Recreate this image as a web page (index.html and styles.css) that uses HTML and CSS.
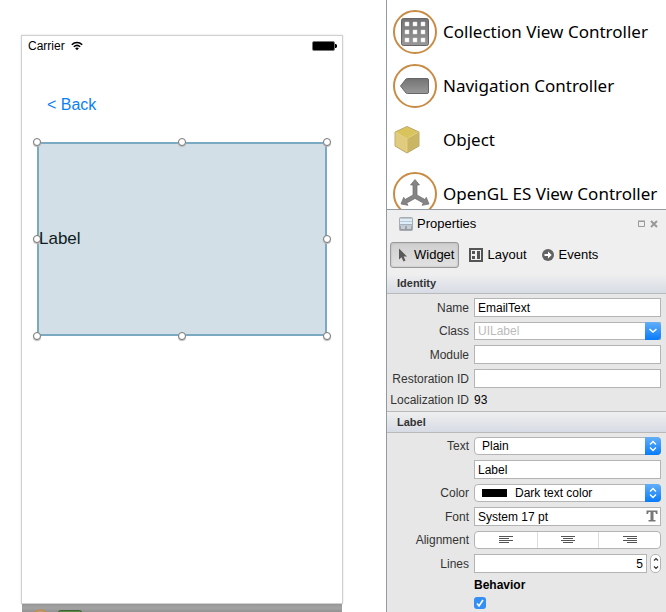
FILE: index.html
```html
<!DOCTYPE html>
<html lang="en">
<head>
<meta charset="utf-8">
<title>Interface designer</title>
<link rel="stylesheet" href="styles.css">
</head>
<body>
<main class="canvas">
  <section class="device" aria-label="Screen preview">
    <div class="status">
      <span>Carrier</span>
      <svg class="wifi" viewBox="0 0 12 10" width="12" height="10" aria-hidden="true">
        <path d="M.8 3.8C3.8.8 8.200.8 11.200 3.800M2.800 5.800C4.800 4 7.200 4 9.200 5.800" fill="none" stroke="#000" stroke-width="1.500"/>
        <path d="M4.100 7.200Q6 5.700 7.900 7.200L6 9.300Z"/>
      </svg>
      <svg class="battery" viewBox="0 0 25 10" width="25" height="10" aria-hidden="true">
        <rect x=".5" y=".5" width="22" height="9" rx="1.500" stroke="#777"/>
        <path d="M23 3h1l1 1v2l-1 1h-1z"/>
      </svg>
    </div>
    <a class="back" href="#">&lt; Back</a>
    <div class="selection">
      <i class="handle top left"></i><i class="handle top center"></i><i class="handle top right"></i>
      <i class="handle middle left"></i><i class="handle middle right"></i>
      <i class="handle bottom left"></i><i class="handle bottom center"></i><i class="handle bottom right"></i>
      <span class="label">Label</span>
    </div>
  </section>
  <div class="dock">
    <svg viewBox="0 0 64 8" width="64" height="8" aria-hidden="true">
      <circle cx="18.500" cy="14" r="8" fill="#b1a18a" stroke="#c78c45" stroke-width="1.500"/>
      <rect x="36.500" y="6.500" width="23" height="12" rx="2" fill="#5b894c" stroke="#3c642f"/>
    </svg>
  </div>
</main>

<aside class="side">
  <svg class="defs" width="0" height="0" aria-hidden="true">
    <defs>
      <linearGradient id="metal" x2="0" y2="1"><stop stop-color="#737373"/><stop offset="1" stop-color="#999"/></linearGradient>
      <linearGradient id="steel" x2="0" y2="1"><stop stop-color="#c5cbd1"/><stop offset="1" stop-color="#8f969e"/></linearGradient>
    </defs>
  </svg>
  <ul class="toolbox">
    <li>
      <svg viewBox="0 0 44 44" width="44" height="44" aria-hidden="true">
        <circle cx="22" cy="22" r="21" fill="#fff" stroke="#c78c45" stroke-width="2"/>
        <rect x="8.500" y="8.500" width="27" height="27" rx="2" fill="url(#metal)" stroke="#666"/>
        <path d="M12 12h4v4h-4zM20 12h4v4h-4zM28 12h4v4h-4zM12 20h4v4h-4zM20 20h4v4h-4zM28 20h4v4h-4zM12 28h4v4h-4zM20 28h4v4h-4zM28 28h4v4h-4z" fill="#fff" stroke="#ddd" stroke-width=".5"/>
      </svg>
      Collection View Controller
    </li>
    <li>
      <svg viewBox="0 0 44 44" width="44" height="44" aria-hidden="true">
        <circle cx="22" cy="22" r="21" fill="#fff" stroke="#c78c45" stroke-width="2"/>
        <path d="M7.500 22 13 15q.7-.5 1.500-.5H34q1.500 0 1.500 1.500V28q0 1.500-1.500 1.500H14.500q-.8 0-1.500-.5Z" fill="url(#metal)" stroke="#666"/>
      </svg>
      Navigation Controller
    </li>
    <li>
      <svg viewBox="0 0 44 44" width="44" height="44" aria-hidden="true">
        <path d="M14 8.500 26 14V28L14 35 2 28V14Z" fill="#d9c576" stroke="#a89250" stroke-width=".8"/>
        <path d="M14 9 25.500 14.200 14 20.500 2.500 14.200Z" fill="#d8c35d"/>
        <path d="M14 20.500V34.500L2.500 27.800V14.200Z" fill="#e0cb7f"/>
        <path d="M14 20.500V34.500L25.500 27.800V14.200Z" fill="#cab563"/>
        <path d="M2.500 14.200 14 20.500 25.500 14.200M14 20.500V34" fill="none" stroke="#e6d78f" stroke-width=".7"/>
      </svg>
      Object
    </li>
    <li>
      <svg viewBox="0 0 44 44" width="44" height="44" aria-hidden="true">
        <circle cx="22" cy="22" r="21" fill="#fff" stroke="#c78c45" stroke-width="2"/>
        <path d="M22 7.500 26.500 13H24V23L32 27.600 33.300 25.300 36 32 29 33.300 30.300 31.100 22 26.400 13.700 31.100 15 33.300 8 32 10.700 25.300 12 27.600 20 23V13H17.500Z" fill="#858585" stroke="#6c6c6c" stroke-width=".7"/>
      </svg>
      OpenGL ES View Controller
    </li>
  </ul>

  <section class="properties">
    <header class="title">
      <svg viewBox="0 0 14 14" width="14" height="14" aria-hidden="true">
        <rect x=".5" y=".5" width="13" height="13" rx="1" fill="url(#steel)" stroke="#a4acb4"/>
        <path d="M1 2h12v5H1z" fill="#e1edf6"/><path d="M1 4.500h12M1 8.500h12" stroke="#b7cad9"/>
        <path d="M2 9h4v3H2zM8 9h4v3H8z" fill="#c9cdd1"/>
      </svg>
      <h2>Properties</h2>
      <button class="window-button" aria-label="Maximize"><svg viewBox="0 0 8 8" width="8" height="8"><path d="M.5 1.500h6v5h-6z" fill="none" stroke="#999"/><path d="M0 1h7" stroke="#999"/></svg></button>
      <button class="window-button" aria-label="Close"><svg viewBox="0 0 8 8" width="8" height="8"><path d="M1 1l6 6M7 1 1 7" stroke="#999" stroke-width="2"/></svg></button>
    </header>
    <nav class="tabs">
      <button class="tab active">
        <svg viewBox="0 0 14 14" width="14" height="14" aria-hidden="true"><path d="M3 .5V11.500L5.500 9.200 7.500 13.500 9.500 12.600 7.600 8.500H11Z" fill="#595959"/></svg>
        Widget
      </button>
      <button class="tab">
        <svg viewBox="0 0 14 14" width="14" height="14" aria-hidden="true"><path d="M1 1h12v12H1z" fill="none" stroke="#555" stroke-width="2"/><path d="M3 3h3v3H3zM3 8h3v3H3zM8 3h3v8H8z" fill="#555"/></svg>
        Layout
      </button>
      <button class="tab">
        <svg viewBox="0 0 14 14" width="14" height="14" aria-hidden="true"><circle cx="7" cy="7" r="6" fill="#626262"/><path d="M3.500 6H7V3.500L10.700 7 7 10.500V8H3.500Z" fill="#fff"/></svg>
        Events
      </button>
    </nav>

    <h3 class="heading">Identity</h3>
    <div class="form">
      <label for="name">Name</label>
      <input class="field" id="name" value="EmailText">
      <label for="class">Class</label>
      <div class="combo">
        <input class="field" id="class" placeholder="UILabel">
        <button class="cap" aria-label="Show classes"><svg viewBox="0 0 16 18" width="16" height="18"><path d="M4.500 7 8 10l3.500-3" fill="none" stroke="#fff" stroke-width="1.600"/></svg></button>
      </div>
      <label for="module">Module</label>
      <input class="field" id="module">
      <label for="restoration">Restoration ID</label>
      <input class="field" id="restoration">
      <label for="localization">Localization ID</label>
      <output id="localization">93</output>
    </div>

    <h3 class="heading ruled">Label</h3>
    <div class="form">
      <label for="text-kind">Text</label>
      <div class="combo popup">
        <select id="text-kind"><option>Plain</option><option>Attributed</option></select>
        <span class="cap"><svg viewBox="0 0 16 18" width="16" height="18" aria-hidden="true"><path d="M5 7.500 8 4.500l3 3M5 10.500l3 3 3-3" fill="none" stroke="#fff" stroke-width="1.400"/></svg></span>
      </div>
      <input class="field wide" aria-label="Text value" value="Label">
      <label for="color">Color</label>
      <div class="combo popup swatched">
        <select id="color"><option>Dark text color</option></select>
        <i class="swatch"></i>
        <span class="cap"><svg viewBox="0 0 16 18" width="16" height="18" aria-hidden="true"><path d="M5 7.500 8 4.500l3 3M5 10.500l3 3 3-3" fill="none" stroke="#fff" stroke-width="1.400"/></svg></span>
      </div>
      <label for="font">Font</label>
      <div class="combo">
        <input class="field" id="font" value="System 17 pt">
        <button class="font-button" aria-label="Choose font"><svg viewBox="0 0 12 12" width="12" height="12"><path d="M.5 .5h11v3.500h-1.500L9.300 2H7.500V10h2v1.500h-7V10h2V2H2.700L2 4H.5Z" fill="#777"/></svg></button>
      </div>
      <span class="caption" id="alignment">Alignment</span>
      <div class="segments" role="group" aria-labelledby="alignment">
        <button aria-label="Left"><svg viewBox="0 0 14 8" width="14" height="8"><path d="M0 .5h14M0 2.500h10M0 4.500h14M0 6.500h10" stroke="#555"/></svg></button>
        <button aria-label="Center"><svg viewBox="0 0 14 8" width="14" height="8"><path d="M0 .5h14M2 2.500h10M0 4.500h14M2 6.500h10" stroke="#555"/></svg></button>
        <button aria-label="Right"><svg viewBox="0 0 14 8" width="14" height="8"><path d="M0 .5h14M4 2.500h10M0 4.500h14M4 6.500h10" stroke="#555"/></svg></button>
      </div>
      <label for="lines">Lines</label>
      <div class="lines">
        <input class="field" id="lines" inputmode="numeric" value="5">
        <div class="stepper">
          <button aria-label="Increase"><svg viewBox="0 0 8 6" width="8" height="6"><path d="M2 4.500l2-2 2 2" fill="none" stroke="#333" stroke-width="1.200"/></svg></button>
          <button aria-label="Decrease"><svg viewBox="0 0 8 6" width="8" height="6"><path d="M2 1.500l2 2 2-2" fill="none" stroke="#333" stroke-width="1.200"/></svg></button>
        </div>
      </div>
      <h4>Behavior</h4>
      <div class="check wide">
        <input type="checkbox" aria-label="Behavior enabled" checked>
        <svg viewBox="0 0 12 12" width="12" height="12" aria-hidden="true"><path d="M3 6.500 5 9l4-6" fill="none" stroke="#fff" stroke-width="1.600"/></svg>
      </div>
    </div>
  </section>
</aside>
</body>
</html>
```
FILE: styles.css
```css
* { box-sizing: border-box; }

body {
  margin: 0;
  height: 100vh;
  overflow: hidden;
  display: grid;
  grid-template-columns: minmax(0, 1fr) 280px;
  background: #fff;
  color: #000;
  font: 12px/14px "Liberation Sans", Arial, sans-serif;
}

h2, h3, h4, ul { margin: 0; padding: 0; font-weight: normal; }
svg { display: block; flex: none; }
button, input, select { margin: 0; padding: 0; border: 0; border-radius: 0; font: inherit; color: inherit; background: none; }
button { display: flex; align-items: center; justify-content: center; }
.defs { position: absolute; }

/* Canvas */
.canvas {
  display: flex;
  flex-direction: column;
  padding: 35px 43px 0 21px;
}

.device {
  flex: 1;
  border: 1px solid #d0d0d0;
  box-shadow: 0 0 2px #ddd;
}

.status {
  display: flex;
  align-items: center;
  gap: 6px;
  height: 20px;
  padding: 0 5px 0 6px;
}
.battery { margin-left: auto; }

.back {
  display: block;
  padding: 40px 25px 28px;
  font-size: 16px;
  line-height: 18px;
  color: #0b7ff5;
  text-decoration: none;
}

.selection {
  position: relative;
  display: flex;
  align-items: center;
  height: 194px;
  margin: 0 15px;
  border: 2px solid #7ba9c1;
  background: #d2dfe7;
  color: #101c22;
  font-size: 17px;
  line-height: 20px;
}
.label { z-index: 1; }

.handle {
  position: absolute;
  width: 8px;
  height: 8px;
  border: 1px solid #777;
  border-radius: 50%;
  background: #fff;
  box-shadow: 0 1px 1px #bbb;
}
.handle.top { top: -6px; }
.handle.middle { top: calc(50% - 4px); }
.handle.bottom { bottom: -6px; }
.handle.left { left: -6px; }
.handle.center { left: calc(50% - 4px); }
.handle.right { right: -6px; }

.dock {
  height: 8px;
  margin: 0 1px;
  background: linear-gradient(#969696, #a3a3a3 50%, #929292);
}

/* Side panel */
.side {
  display: flex;
  flex-direction: column;
  min-height: 0;
  border-left: 1px solid #929aa2;
}

.toolbox {
  flex: 1;
  min-height: 0;
  overflow: hidden;
  padding: 5px 6px;
  list-style: none;
  font: 17px/22px "Noto Sans", "Lucida Grande", sans-serif;
}
.toolbox li {
  display: flex;
  align-items: center;
  gap: 6px;
  height: 54px;
  white-space: nowrap;
}

.properties {
  border-top: 1px solid #929aa2;
  background: #e7e7e7;
}

.title {
  display: flex;
  align-items: center;
  gap: 4px;
  height: 28px;
  padding: 0 8px 0 12px;
  background: #efefef;
}
.title h2 { flex: 1; font-size: 13px; line-height: 16px; }

.tabs {
  display: flex;
  gap: 6px;
  padding: 4px 3px 6px;
  background: #efefef;
}
.tab {
  gap: 4px;
  height: 26px;
  padding: 0 3px;
  border: 1px solid transparent;
  border-radius: 3px;
  font-size: 13px;
}
.tab.active {
  padding: 0 4px 0 5px;
  border-color: #999;
  background: linear-gradient(#cfcfcf, #e2e2e2);
  box-shadow: inset 0 0 2px #aaa;
}

.heading {
  padding: 2px 10px;
  border-bottom: 1px solid #b9b9b9;
  background: linear-gradient(#efefef, #d7dbe4);
  color: #333;
  font-size: 11px;
  font-weight: bold;
  line-height: 15px;
}
.heading.ruled {
  padding: 3px 10px 2px;
  border-top: 1px solid #b9b9b9;
}

.form {
  display: grid;
  grid-template-columns: 82px minmax(0, 1fr);
  gap: 5px;
  align-items: center;
  padding: 4px 5px 4px 0;
}
.form:last-child { padding-bottom: 3px; }
.form label, .caption {
  text-align: right;
  white-space: nowrap;
  color: #333;
}
.wide, .form h4 { grid-column: 2; }
.form h4 { font-weight: bold; }

.field {
  width: 100%;
  height: 19px;
  padding: 0 3px;
  border: 1px solid #b4b4b4;
  background: #fff;
}
.field::placeholder { color: #bbb; opacity: 1; }

.combo { position: relative; height: 18px; }
.combo .field { display: block; height: 100%; }
.combo:has(.font-button) { height: 19px; }
.popup select {
  display: block;
  appearance: none;
  width: 100%;
  height: 100%;
  padding: 0 20px 0 7px;
  border: 1px solid #b4b4b4;
  border-radius: 4px;
  background: #fff;
}
.popup.swatched select { padding-left: 40px; }
.cap {
  position: absolute;
  top: 0;
  right: 0;
  width: 16px;
  height: 100%;
  border-radius: 0 4px 4px 0;
  background: linear-gradient(#63aff8, #087bfa);
}
span.cap { pointer-events: none; }
.swatch {
  position: absolute;
  top: 5px;
  left: 8px;
  width: 25px;
  height: 8px;
  background: #000;
}
.font-button {
  position: absolute;
  top: 3px;
  right: 3px;
}

.segments {
  display: grid;
  grid-template-columns: repeat(3, 1fr);
  height: 18px;
  border: 1px solid #b4b4b4;
  border-radius: 4px;
  background: #fff;
}
.segments button + button { border-left: 1px solid #ddd; }

.lines { display: flex; gap: 3px; }
.lines .field { flex: 1; min-width: 0; text-align: right; }
.stepper {
  display: grid;
  width: 11px;
  border: 1px solid #b4b4b4;
  border-radius: 5px;
  background: #fff;
}

.check { position: relative; height: 12px; }
.check input {
  display: block;
  appearance: none;
  width: 12px;
  height: 12px;
  border-radius: 3px;
  background: #348ff5;
}
.check svg { position: absolute; top: 0; left: 0; pointer-events: none; }
```
